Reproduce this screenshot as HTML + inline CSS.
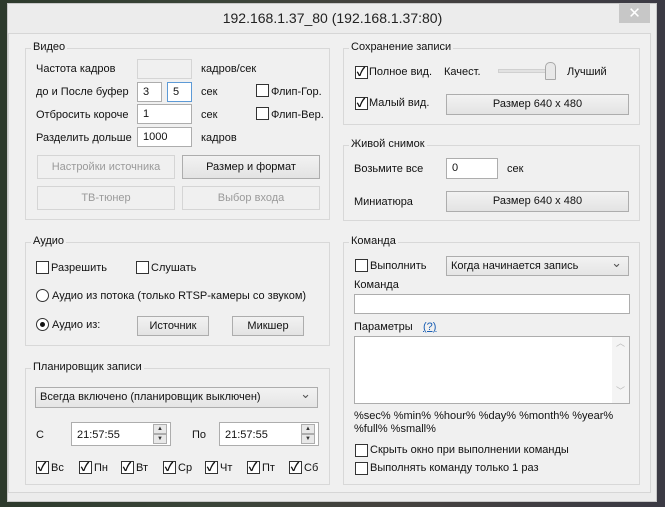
<!DOCTYPE html>
<html><head><meta charset="utf-8"><style>
*{box-sizing:border-box;margin:0;padding:0}
body{width:665px;height:507px;overflow:hidden;background:linear-gradient(90deg,#2d3a2c,#3a4438 30%,#45423f 60%,#3b3a44);font-family:"Liberation Sans","Noto Sans CJK SC",sans-serif;font-size:11px;color:#111;position:relative}
.win{position:absolute;left:7px;top:3px;width:650px;height:499px;background:#ececec;border:1px solid #c8c8c8}
.client{position:absolute;left:8px;top:33px;width:643px;height:460px;background:#f0f0f0;border:1px solid #d6d6d6}
.a{position:absolute;white-space:nowrap}
.title{position:absolute;left:0;width:665px;top:10px;text-align:center;font-size:14px;color:#222}
.close{position:absolute;left:619px;top:4px;width:31px;height:19px;background:#c7c7c7;color:#fff;text-align:center;font-size:15px;line-height:19px}
.grp{position:absolute;border:1px solid #d8d8d8}
.lg{position:absolute;background:#f0f0f0;padding:0 2px;white-space:nowrap}
.in{position:absolute;background:#fff;border:1px solid #adadad;padding:2px 0 0 5px;line-height:15px}
.btn{position:absolute;border:1px solid #adadad;background:linear-gradient(#f2f2f2,#e3e3e3);text-align:center;line-height:18px}
.dis{border-color:#d5d5d5;background:#f0f0f0;color:#9a9a9a}
.cb{position:absolute;width:13px;height:13px;border:1px solid #333;background:#fff;font-size:12px;line-height:10px;text-align:center;font-weight:bold;text-indent:-1px}
.rb{position:absolute;width:13px;height:13px;border:1px solid #333;border-radius:50%;background:#fff}
.sel{position:absolute;border:1px solid #adadad;background:linear-gradient(#f2f2f2,#e5e5e5);padding-left:4px;line-height:19px}
.sel:after{content:"⌄";position:absolute;right:6px;top:-4px;font-size:13px;color:#555}
.spin{position:absolute;width:14px;border:1px solid #adadad;background:#e8e8e8;font-size:6px;text-align:center;line-height:9px;color:#333}
</style></head><body>
<div class="win"></div>
<div class="client"></div>
<div class="title">192.168.1.37_80 (192.168.1.37:80)</div>
<div class="close">✕</div>

<div class="grp" style="left:25px;top:48px;width:305px;height:172px"></div>
<div class="lg" style="left:31px;top:41px">Видео</div>
<div class="a" style="left:36px;top:63px">Частота кадров</div>
<div class="in" style="left:137px;top:59px;width:55px;height:20px;background:#f0f0f0;border-color:#d5d5d5"></div>
<div class="a" style="left:201px;top:63px">кадров/сек</div>
<div class="a" style="left:36px;top:86px">до и После буфер</div>
<div class="in" style="left:137px;top:82px;width:25px;height:20px">3</div>
<div class="in" style="left:167px;top:82px;width:25px;height:20px;border-color:#5d9ad6">5</div>
<div class="a" style="left:201px;top:86px">сек</div>
<div class="cb" style="left:256px;top:84px"></div><div class="a" style="left:271px;top:86px">Флип-Гор.</div>
<div class="a" style="left:36px;top:109px">Отбросить короче</div>
<div class="in" style="left:137px;top:104px;width:55px;height:20px">1</div>
<div class="a" style="left:201px;top:109px">сек</div>
<div class="cb" style="left:256px;top:107px"></div><div class="a" style="left:271px;top:109px">Флип-Вер.</div>
<div class="a" style="left:36px;top:132px">Разделить дольше</div>
<div class="in" style="left:137px;top:127px;width:55px;height:20px">1000</div>
<div class="a" style="left:201px;top:132px">кадров</div>
<div class="btn dis" style="left:37px;top:155px;width:138px;height:24px;line-height:22px">Настройки источника</div>
<div class="btn" style="left:182px;top:155px;width:138px;height:24px;line-height:22px">Размер и формат</div>
<div class="btn dis" style="left:37px;top:186px;width:138px;height:24px;line-height:22px">ТВ-тюнер</div>
<div class="btn dis" style="left:182px;top:186px;width:138px;height:24px;line-height:22px">Выбор входа</div>

<div class="grp" style="left:25px;top:242px;width:305px;height:104px"></div>
<div class="lg" style="left:31px;top:235px">Аудио</div>
<div class="cb" style="left:36px;top:261px"></div><div class="a" style="left:51px;top:262px">Разрешить</div>
<div class="cb" style="left:136px;top:261px"></div><div class="a" style="left:151px;top:262px">Слушать</div>
<div class="rb" style="left:36px;top:289px"></div><div class="a" style="left:52px;top:290px">Аудио из потока (только RTSP-камеры со звуком)</div>
<div class="rb" style="left:36px;top:318px"></div><div style="position:absolute;left:40px;top:322px;width:5px;height:5px;border-radius:50%;background:#111"></div>
<div class="a" style="left:52px;top:319px">Аудио из:</div>
<div class="btn" style="left:137px;top:316px;width:72px;height:20px">Источник</div>
<div class="btn" style="left:232px;top:316px;width:72px;height:20px">Микшер</div>

<div class="grp" style="left:25px;top:368px;width:305px;height:117px"></div>
<div class="lg" style="left:31px;top:361px">Планировщик записи</div>
<div class="sel" style="left:35px;top:387px;width:283px;height:21px">Всегда включено (планировщик выключен)</div>
<div class="a" style="left:36px;top:429px">С</div>
<div class="in" style="left:71px;top:422px;width:100px;height:24px;padding-top:5px">21:57:55</div>
<div class="spin" style="left:153px;top:424px;height:10px">▲</div><div class="spin" style="left:153px;top:434px;height:10px">▼</div>
<div class="a" style="left:192px;top:429px">По</div>
<div class="in" style="left:219px;top:422px;width:100px;height:24px;padding-top:5px">21:57:55</div>
<div class="spin" style="left:301px;top:424px;height:10px">▲</div><div class="spin" style="left:301px;top:434px;height:10px">▼</div>
<div class="cb" style="left:36px;top:461px">✓</div><div class="a" style="left:51px;top:462px">Вс</div>
<div class="cb" style="left:79px;top:461px">✓</div><div class="a" style="left:94px;top:462px">Пн</div>
<div class="cb" style="left:121px;top:461px">✓</div><div class="a" style="left:136px;top:462px">Вт</div>
<div class="cb" style="left:163px;top:461px">✓</div><div class="a" style="left:178px;top:462px">Ср</div>
<div class="cb" style="left:205px;top:461px">✓</div><div class="a" style="left:220px;top:462px">Чт</div>
<div class="cb" style="left:247px;top:461px">✓</div><div class="a" style="left:262px;top:462px">Пт</div>
<div class="cb" style="left:289px;top:461px">✓</div><div class="a" style="left:304px;top:462px">Сб</div>

<div class="grp" style="left:343px;top:48px;width:297px;height:77px"></div>
<div class="lg" style="left:349px;top:41px">Сохранение записи</div>
<div class="cb" style="left:355px;top:66px">✓</div><div class="a" style="left:369px;top:66px">Полное вид.</div>
<div class="a" style="left:444px;top:66px">Качест.</div>
<div style="position:absolute;left:498px;top:69px;width:50px;height:4px;background:#e2e2e2;border:1px solid #d0d0d0"></div>
<div style="position:absolute;left:545px;top:62px;width:11px;height:18px;background:#e8e8e8;border:1px solid #a8a8a8;border-radius:5px 5px 1px 1px"></div>
<div class="a" style="left:567px;top:66px">Лучший</div>
<div class="cb" style="left:355px;top:97px">✓</div><div class="a" style="left:369px;top:97px">Малый вид.</div>
<div class="btn" style="left:446px;top:94px;width:183px;height:21px">Размер 640 x 480</div>

<div class="grp" style="left:343px;top:145px;width:297px;height:76px"></div>
<div class="lg" style="left:349px;top:138px">Живой снимок</div>
<div class="a" style="left:354px;top:163px">Возьмите все</div>
<div class="in" style="left:446px;top:158px;width:52px;height:21px">0</div>
<div class="a" style="left:507px;top:163px">сек</div>
<div class="a" style="left:354px;top:196px">Миниатюра</div>
<div class="btn" style="left:446px;top:191px;width:183px;height:21px">Размер 640 x 480</div>

<div class="grp" style="left:343px;top:242px;width:297px;height:243px"></div>
<div class="lg" style="left:349px;top:235px">Команда</div>
<div class="cb" style="left:355px;top:259px"></div><div class="a" style="left:370px;top:260px">Выполнить</div>
<div class="sel" style="left:446px;top:256px;width:183px;height:20px">Когда начинается запись</div>
<div class="a" style="left:354px;top:279px">Команда</div>
<div class="in" style="left:354px;top:294px;width:276px;height:20px"></div>
<div class="a" style="left:354px;top:321px">Параметры</div>
<div class="a" style="left:423px;top:321px;color:#1a5fb4;text-decoration:underline">(?)</div>
<div class="in" style="left:354px;top:336px;width:276px;height:68px"></div>
<div style="position:absolute;left:612px;top:337px;width:17px;height:66px;background:#f4f4f4;color:#bbb;font-size:9px;text-align:center;line-height:12px">︿<br><br><br><br>﹀</div>
<div class="a" style="left:354px;top:410px">%sec% %min% %hour% %day% %month% %year%</div>
<div class="a" style="left:354px;top:423px">%full% %small%</div>
<div class="cb" style="left:355px;top:444px"></div><div class="a" style="left:370px;top:444px">Скрыть окно при выполнении команды</div>
<div class="cb" style="left:355px;top:462px"></div><div class="a" style="left:370px;top:462px">Выполнять команду только 1 раз</div>
</body></html>
